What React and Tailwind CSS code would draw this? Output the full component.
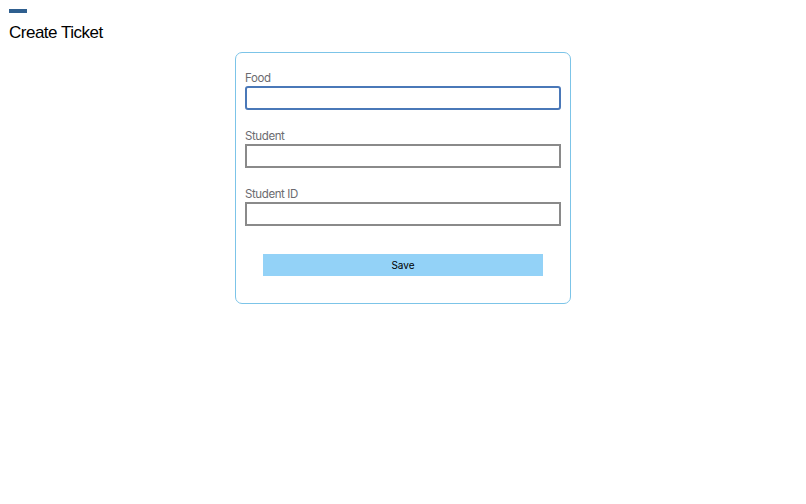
export default function App() {
  const fields = ["Food", "Student", "Student ID"];

  return (
    <div className="min-h-screen bg-white font-['Liberation_Sans',Arial,sans-serif] text-black">
      <div className="px-[9px] pt-[9px]">
        <div className="h-[4px] w-[18px] bg-[#2f5f8f]" />
        <h1 className="mt-[8px] text-[17px] leading-[24px] tracking-[-0.5px]">Create Ticket</h1>
      </div>

      <div className="ml-[235px] mt-[7px] w-[336px] rounded-[7px] border border-[#7cc4e8] px-[9px] pb-[27px] pt-[18px]">
        {fields.map((label, i) => (
          <div key={label} className="mb-[19px]">
            <label className="block font-['Inter',sans-serif] text-[11.5px] leading-[15px] tracking-[-0.4px] text-[#6b6b70]">
              {label}
            </label>
            <input
              type="text"
              className={
                i === 0
                  ? "block h-[24px] w-full rounded-[3px] border-2 border-[#4a78b8] bg-white px-1 outline-none"
                  : "block h-[24px] w-full border-2 border-[#8a8a8a] bg-white px-1 outline-none"
              }
            />
          </div>
        ))}
        <div className="pt-[9px] px-[18px]">
          <button className="block h-[22px] w-full bg-[#93d2f7] font-['Inter',sans-serif] text-[10px] text-black">
            Save
          </button>
        </div>
      </div>
    </div>
  );
}
